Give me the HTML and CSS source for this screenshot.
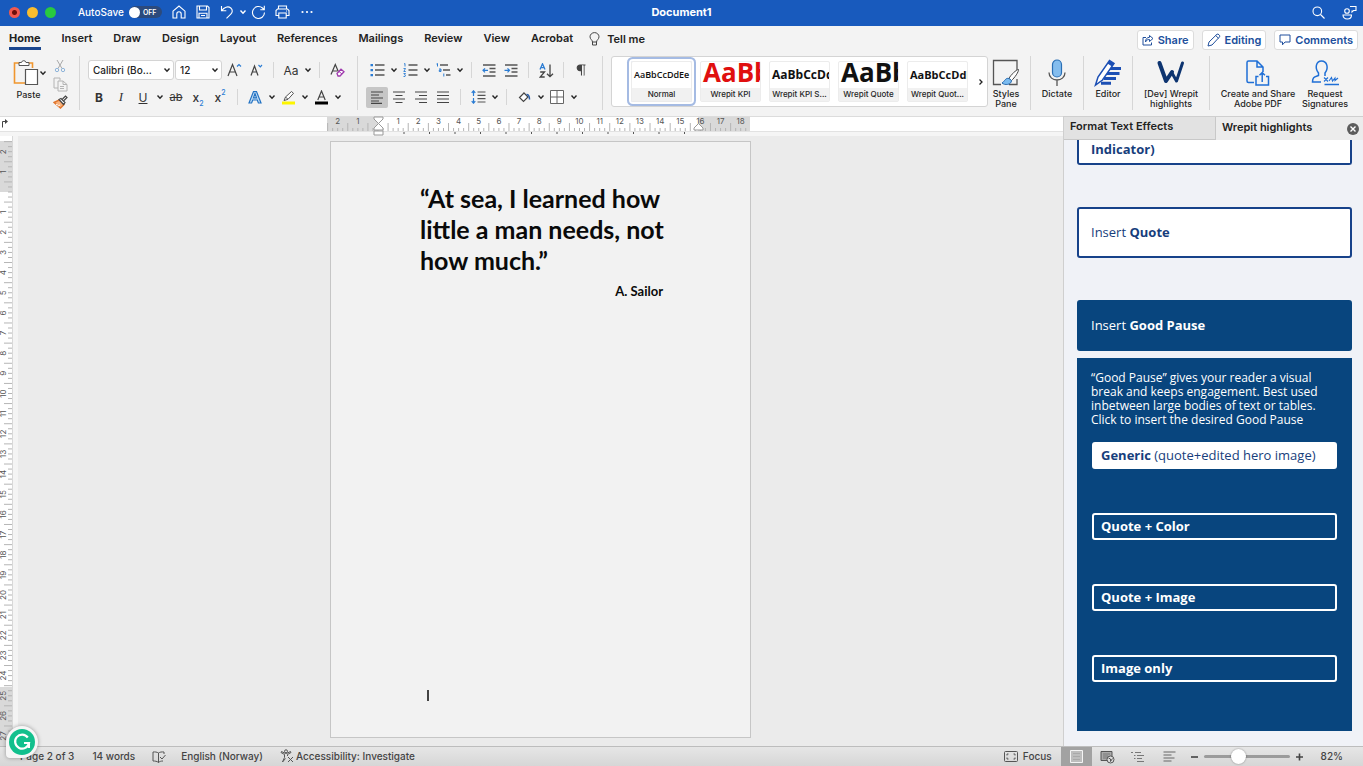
FILE: index.html
```html
<!DOCTYPE html>
<html lang="en">
<head>
  <meta charset="utf-8">
  <title>Document1</title>
  <link rel="stylesheet" href="styles.css">
</head>
<body>
  <svg class="defs" aria-hidden="true">
    <symbol id="chev" viewBox="0 0 8 8"><path d="M1.5 2.5 4 5.2 6.5 2.5" fill="none" stroke="currentColor" stroke-width="1.4"/></symbol>
  </svg>

  <header class="titlebar">
    <div class="title-left">
      <span class="light red"></span>
      <span class="light yellow"></span>
      <span class="light green"></span>
      <label class="autosave">AutoSave <span class="switch"><input type="checkbox"><span>OFF</span></span></label>
      <button class="tbtn" aria-label="Home"><svg width="14" height="14" viewBox="0 0 14 14"><path d="M1 6.200 7 1l6 5.200V13H9.200V9a2.200 2.200 0 0 0-4.400 0v4H1z"/></svg></button>
      <button class="tbtn" aria-label="Save"><svg width="14" height="14" viewBox="0 0 14 14"><path d="M1 1h10.500L13 2.500V13H1zM3.500 1v4h7V1M3 13V8.300h8V13M5 10.500h4"/></svg></button>
      <button class="tbtn" aria-label="Undo"><svg width="14" height="14" viewBox="0 0 14 14"><path d="M1.500 1v4.800h4.800M1.800 5.600C4 2.200 8 .8 10.800 3c2.300 2 1.600 4.600 0 6.200L6.500 13.400"/></svg></button>
      <button class="tbtn narrow" aria-label="Undo list"><svg width="8" height="8"><use href="#chev"/></svg></button>
      <button class="tbtn" aria-label="Redo"><svg width="15" height="15" viewBox="0 0 15 15"><path d="M13.500 7.500A6 6 0 1 1 11.500 3l1.500 1.500M13.300.8v4H9.300"/></svg></button>
      <button class="tbtn" aria-label="Print"><svg width="15" height="14" viewBox="0 0 15 14"><path d="M3.500 4V1h8v3M3.500 10.500H1V5.500L2.500 4h10L14 5.500v5h-2.500M3.800 8h7.400v5H3.800zM11 6h1"/></svg></button>
      <button class="tbtn" aria-label="More"><svg class="dots" width="12" height="4" viewBox="0 0 12 4"><circle cx="1.500" cy="2" r="1.100"/><circle cx="6" cy="2" r="1.100"/><circle cx="10.500" cy="2" r="1.100"/></svg></button>
    </div>
    <h1>Document1</h1>
    <div class="title-right">
      <button class="tbtn" aria-label="Search"><svg width="13" height="13" viewBox="0 0 13 13"><circle cx="5.300" cy="5.300" r="4.300"/><path d="m8.500 8.500 4 4"/></svg></button>
      <button class="tbtn" aria-label="Coauthors"><svg width="15" height="15" viewBox="0 0 15 15"><circle cx="5" cy="6" r="2.300"/><path d="M1 10h8.500c0 2.500-1.500 4-4.200 4S1 12.500 1 10zM8 1.500h6v4h-2.500L10 7V5.500"/></svg></button>
    </div>
  </header>

  <nav class="tabs">
    <a class="active" href="#">Home</a>
    <a href="#">Insert</a>
    <a href="#">Draw</a>
    <a href="#">Design</a>
    <a href="#">Layout</a>
    <a href="#">References</a>
    <a href="#">Mailings</a>
    <a href="#">Review</a>
    <a href="#">View</a>
    <a href="#">Acrobat</a>
    <a class="tell" href="#"><svg width="11" height="14" viewBox="0 0 11 14" fill="none" stroke="#444"><path d="M3.500 10C3.500 8 1 7.300 1 4.800a4.500 4.200 0 0 1 9 0C10 7.300 7.500 8 7.500 10zM3.500 10v3h4v-3"/></svg>Tell me</a>
    <div class="tab-actions">
      <button class="action"><svg width="12" height="12" viewBox="0 0 12 12"><path d="M4 3.500H1V11h8.500V8.500M7.500 1.500 11 4.500 7.500 7.500v-2C5.500 5.500 4.500 6 3.500 8c0-3 1.500-4.500 4-4.700z"/></svg>Share</button>
      <button class="action"><svg width="14" height="14" viewBox="0 0 14 14"><path d="M1 13l1-4L10 1.200c1-.8 3.500 1.400 2.600 2.600L5 12zM8.700 2.500l2.800 2.800"/></svg>Editing</button>
      <button class="action"><svg width="12" height="12" viewBox="0 0 12 12"><path d="M1 1h10v7H6L3.500 10.800V8H1z"/></svg>Comments</button>
    </div>
  </nav>

  <section class="ribbon">
    <div class="group clipboard">
      <button class="paste">
        <span class="paste-icon">
          <svg width="26" height="28" viewBox="0 0 26 28" fill="none"><path d="M6 4H1.500v20H12M16 4h3.500v5" stroke="#f0962e" stroke-width="1.600"/><path d="M6 6.500V3.500h2.500a2.300 2.300 0 0 1 4.500 0H16v3z" fill="#fff" stroke="#555"/><path d="M12.500 10.500h12v15h-12z" fill="#fff" stroke="#555" stroke-width="1.200"/></svg>
          <svg width="8" height="8"><use href="#chev"/></svg>
        </span>
        Paste
      </button>
      <div class="stack">
        <button class="tool" aria-label="Cut"><svg width="12" height="14" viewBox="0 0 12 14" fill="none"><path d="M3 1l5 8.500M9 1 4 9.500" stroke="#a9a9a9"/><circle cx="3" cy="11" r="1.700" stroke="#8fb5da"/><circle cx="9" cy="11" r="1.700" stroke="#8fb5da"/></svg></button>
        <button class="tool" aria-label="Copy"><svg width="15" height="15" viewBox="0 0 15 15" fill="none" stroke="#b4b4b4"><path d="M5 11H1V1h6v2.500M5 4h5l4 3.500V14H5zM10 4v3.500h4M7 9.500h4M7 11.500h4"/></svg></button>
        <button class="tool" aria-label="Format painter"><svg width="15" height="14" viewBox="0 0 15 14"><path d="M1 7.500 6 5l5 4.500L7.500 13z" fill="#f9b27c" stroke="#e0752c" stroke-width="1.400"/><path d="M3 9.500l2 .5M5 11l2-1" stroke="#fff"/><path d="m6 4.500 2-1 4 4-1.500 2zM9.500 4l3-3 1.500 1.500-3 3" fill="#fff" stroke="#444" stroke-width="1.200"/></svg></button>
      </div>
    </div>
    <i class="divider"></i>

    <div class="group rows font">
      <div class="row">
        <span class="select wide"><select aria-label="Font"><option>Calibri (Bo...</option></select><svg width="8" height="8"><use href="#chev"/></svg></span>
        <span class="select"><select aria-label="Font size"><option>12</option></select><svg width="8" height="8"><use href="#chev"/></svg></span>
        <button class="tool" aria-label="Grow font"><svg width="15" height="14" viewBox="0 0 15 14" fill="none"><path d="M1 13 5.500 1.500 10 13M2.600 9h5.800" stroke="#444" stroke-width="1.200"/><path d="m10 3.500 2-2 2 2" stroke="#2b7cd3" stroke-width="1.200"/></svg></button>
        <button class="tool" aria-label="Shrink font"><svg width="14" height="12" viewBox="0 0 14 12" fill="none"><path d="M2 11.500 5.500 2 9 11.500M3.300 8h4.400" stroke="#444" stroke-width="1.200"/><path d="m9.500 1 1.800 1.800L13 1" stroke="#2b7cd3" stroke-width="1.200"/></svg></button>
        <i class="sep"></i>
        <button class="tool thin">Aa</button>
        <button class="chev" aria-label="Case options"><svg width="8" height="8"><use href="#chev"/></svg></button>
        <i class="sep"></i>
        <button class="tool" aria-label="Clear formatting"><svg width="15" height="14" viewBox="0 0 15 14" fill="none"><path d="M1 11.500 5.300 1.500l3 7M2.600 8h4.600" stroke="#444" stroke-width="1.200"/><path d="m7 10.500 4-4.300 3 2.500L10 13H8z" fill="#fff" stroke="#a03aae" stroke-width="1.300"/><path d="m9 8.500 3 2.500" stroke="#a03aae"/></svg></button>
      </div>
      <div class="row">
        <button class="tool bold">B</button>
        <button class="tool italic">I</button>
        <button class="tool under">U</button>
        <button class="chev" aria-label="Underline options"><svg width="8" height="8"><use href="#chev"/></svg></button>
        <button class="tool strike">ab</button>
        <button class="tool script">x<sub>2</sub></button>
        <button class="tool script">x<sup>2</sup></button>
        <i class="sep"></i>
        <button class="tool" aria-label="Text effects"><svg width="14" height="14" viewBox="0 0 14 14"><path d="M1 13 5.500 1.500h3L13 13h-2.600L9.300 10H4.700L3.600 13zM5.500 7.800h3L7 3.500z" fill="#c5def5" stroke="#2272c3" stroke-width="1.200"/></svg></button>
        <button class="chev" aria-label="Effects options"><svg width="8" height="8"><use href="#chev"/></svg></button>
        <button class="tool" aria-label="Highlight"><svg width="15" height="15" viewBox="0 0 15 15"><path d="M1 11.500h13v3H1z" fill="#fdf500"/><path d="M3 10.500 4.500 7 10.500 1.500l2 1.800L7 9.300zM4.500 7 7 9.300" fill="#fff" stroke="#555"/></svg></button>
        <button class="chev" aria-label="Highlight options"><svg width="8" height="8"><use href="#chev"/></svg></button>
        <button class="tool" aria-label="Font color"><svg width="15" height="15" viewBox="0 0 15 15"><path d="M1 11.500h13v3H1z"/><path d="M3.800 10 7.500 1 11.200 10M5 7h5" fill="none" stroke="#444" stroke-width="1.200"/></svg></button>
        <button class="chev" aria-label="Color options"><svg width="8" height="8"><use href="#chev"/></svg></button>
      </div>
    </div>
    <i class="divider"></i>

    <div class="group rows para">
      <div class="row">
        <button class="tool" aria-label="Bullets"><svg width="15" height="14" viewBox="0 0 15 14"><path d="M5 2h9.500M5 7h9.500M5 12h9.500" stroke="#555" stroke-width="1.300"/><path d="M.5 1h2.500v2.200H.5zM.5 6h2.500v2.200H.5zM.5 11h2.500v2.200H.5z" fill="#2b7cd3"/></svg></button>
        <button class="chev" aria-label="Bullet options"><svg width="8" height="8"><use href="#chev"/></svg></button>
        <button class="tool" aria-label="Numbering"><svg width="15" height="14" viewBox="0 0 15 14" fill="none"><path d="M5.500 2h9M5.500 7h9M5.500 12h9" stroke="#555" stroke-width="1.300"/><path d="M1 1l1-.5v3M.5 5.500h2L.8 8.500h2M.5 10.500h2l-1 1.300 1 .5-.5 1.200H.5" stroke="#2b7cd3" stroke-width=".9"/></svg></button>
        <button class="chev" aria-label="Numbering options"><svg width="8" height="8"><use href="#chev"/></svg></button>
        <button class="tool" aria-label="Multilevel list"><svg width="15" height="14" viewBox="0 0 15 14" fill="none"><path d="M4 2h8M7 7h7M10 12h4.500" stroke="#555" stroke-width="1.300"/><path d="M.5 1l1-.5v3M3 6h2v2.500H3.300V7H5M7.800 10.500v3" stroke="#2b7cd3"/></svg></button>
        <button class="chev" aria-label="Multilevel options"><svg width="8" height="8"><use href="#chev"/></svg></button>
        <i class="sep"></i>
        <button class="tool" aria-label="Decrease indent"><svg width="14" height="13" viewBox="0 0 14 13" fill="none"><path d="M1 1h12.500M7.500 4.500h6M7.500 8h6M1 12h12.500" stroke="#555" stroke-width="1.300"/><path d="M6 6.300H1M3 4.300l-2 2 2 2" stroke="#2b7cd3" stroke-width="1.200"/></svg></button>
        <button class="tool" aria-label="Increase indent"><svg width="14" height="13" viewBox="0 0 14 13" fill="none"><path d="M1 1h12.500M7.500 4.500h6M7.500 8h6M1 12h12.500" stroke="#555" stroke-width="1.300"/><path d="M.5 6.300h5M3.500 4.300l2 2-2 2" stroke="#2b7cd3" stroke-width="1.200"/></svg></button>
        <i class="sep"></i>
        <button class="tool" aria-label="Sort"><svg width="15" height="15" viewBox="0 0 15 15" fill="none" stroke-width="1.300"><path d="M1 6.500 3.500.8 6 6.500M2 4.700h3" stroke="#2b7cd3"/><path d="M1.200 9h4.300l-4.300 5h4.500M11 1.500v12M8 10.700l3 3 3-3" stroke="#444"/></svg></button>
        <i class="sep"></i>
        <button class="tool" aria-label="Show marks"><svg width="10" height="12" viewBox="0 0 10 12"><path d="M9.500 1H4a2.800 2.800 0 0 0 0 5.600h1V1M5.500 1v10.500M8 1v10.500" fill="#444" stroke="#444" stroke-width="1.100"/><path d="M6 1.500h1.500v10H6z" fill="#f3f3f3"/></svg></button>
      </div>
      <div class="row">
        <button class="tool on" aria-label="Align left"><svg width="14" height="13" viewBox="0 0 14 13" stroke="#444" stroke-width="1.200"><path d="M1 1h12M1 4h8M1 7h12M1 10h8M1 12.400h11"/></svg></button>
        <button class="tool" aria-label="Center"><svg width="14" height="13" viewBox="0 0 14 13" stroke="#444" stroke-width="1.200"><path d="M1 1h12M3.500 4.500h7M1 8h12M3.500 11.500h7"/></svg></button>
        <button class="tool" aria-label="Align right"><svg width="14" height="13" viewBox="0 0 14 13" stroke="#444" stroke-width="1.200"><path d="M1 1h12M5 4.500h8M1 8h12M5 11.500h8"/></svg></button>
        <button class="tool" aria-label="Justify"><svg width="14" height="13" viewBox="0 0 14 13" stroke="#444" stroke-width="1.200"><path d="M1 1h12M1 4.500h12M1 8h12M1 11.500h12"/></svg></button>
        <i class="sep"></i>
        <button class="tool" aria-label="Line spacing"><svg width="15" height="14" viewBox="0 0 15 14" fill="none"><path d="M6.500 2h8M6.500 5.300h8M6.500 8.600h8M6.500 12h8" stroke="#555" stroke-width="1.200"/><path d="M2.500 1v5M.7 2.800l1.800-2 1.800 2M2.500 8v5M.7 11.200l1.800 2 1.800-2" stroke="#2b7cd3" stroke-width="1.200"/></svg></button>
        <button class="chev" aria-label="Spacing options"><svg width="8" height="8"><use href="#chev"/></svg></button>
        <i class="sep"></i>
        <button class="tool" aria-label="Shading"><svg width="13" height="13" viewBox="0 0 13 13"><path d="M5.500 1.500 10 6l-4.500 4.500L1.500 6.500 6 2" fill="#fff" stroke="#444" stroke-width="1.200"/><path d="M8.500 3.500c2 0 3 1.500 3 5" fill="none" stroke="#2b5ea8" stroke-width="1.500"/></svg></button>
        <button class="chev" aria-label="Shading options"><svg width="8" height="8"><use href="#chev"/></svg></button>
        <button class="tool" aria-label="Borders"><svg width="14" height="14" viewBox="0 0 14 14" fill="#fff" stroke="#666"><path d="M.5.5h13v13H.5zM7 .5v13M.5 7h13"/></svg></button>
        <button class="chev" aria-label="Border options"><svg width="8" height="8"><use href="#chev"/></svg></button>
      </div>
    </div>
    <i class="divider"></i>

    <div class="gallery">
      <button class="style current"><span class="sample small">AaBbCcDdEe</span><span class="name">Normal</span></button>
      <button class="style"><span class="sample big kpi">AaBb</span><span class="name">Wrepit KPI</span></button>
      <button class="style"><span class="sample mid">AaBbCcDd</span><span class="name">Wrepit KPI S...</span></button>
      <button class="style"><span class="sample big">AaBb</span><span class="name">Wrepit Quote</span></button>
      <button class="style"><span class="sample">AaBbCcDdE</span><span class="name">Wrepit Quot...</span></button>
      <button class="more" aria-label="More styles"><svg width="6" height="8" viewBox="0 0 6 8"><path d="m1.500 1.500 2.500 2.500-2.500 2.500" fill="none" stroke="#222" stroke-width="1.300"/></svg></button>
    </div>

    <div class="group big-tools">
      <button class="big-tool w-small"><svg width="28" height="28" viewBox="0 0 28 28" fill="none"><path d="M25 14V1.500H1.500v24H9M25 20v5.500h-8" stroke="#555" stroke-width="1.300"/><path d="M26.500 10.500c-2 0-8 5.500-9.500 9l2.500 2c3-2.500 7.500-9 7-11z" fill="#fff" stroke="#444"/><path d="M17 19.500c-3.500-1-4 2.500-7 4.500 2.500 2.500 9.500 2 9.500-2.500z" fill="#7cbcf0" stroke="#2b6cb0"/></svg>Styles<br>Pane</button>
      <i class="divider"></i>
      <button class="big-tool w-mid"><svg width="20" height="28" viewBox="0 0 20 28" fill="none"><rect x="5.500" y="1" width="9" height="17" rx="4.500" fill="#84bdee" stroke="#2a6fb5" stroke-width="1.200"/><path d="M2 13.500c0 10 16 10 16 0M10 21v6" stroke="#555" stroke-width="1.300"/></svg>Dictate</button>
      <i class="divider"></i>
      <button class="big-tool w-small"><svg width="28" height="28" viewBox="0 0 28 28"><path d="M15 9.500h12M12.500 14.500h13M10 19.500h12M7 24.300h10" stroke="#1c4fb4" stroke-width="3"/><path d="M1.500 26 4 18 15.500 1.500l4.500 3L8.500 21z" fill="#fff" stroke="#1c4fb4" stroke-width="1.500"/><path d="m15.500 1.500 4.500 3-2 3-4.500-3z" fill="#1c4fb4"/></svg>Editor</button>
      <i class="divider"></i>
      <button class="big-tool w-wide"><svg width="30" height="28" viewBox="0 0 30 28" fill="none" stroke="#0d3470" stroke-linecap="round"><path d="M3.500 4 10 22l6-9" stroke-width="4" stroke-linejoin="round"/><path d="m16 14 4.500 8L26.500 4" stroke-width="3" stroke-linejoin="round"/></svg>[Dev] Wrepit<br>highlights</button>
      <i class="divider"></i>
      <button class="big-tool w-pdf"><svg width="24" height="28" viewBox="0 0 24 28" fill="none" stroke="#1f6fd6" stroke-width="1.500"><path d="M8 23.500H2.500a1.500 1.500 0 0 1-1.500-1.500V3.500A1.500 1.500 0 0 1 2.500 2H11l6 6v5M11 2v6h6M12.500 17.500H10V26h12.500v-8.500H20M16.200 23v-9M13.500 16.200l2.700-2.700 2.700 2.700"/></svg>Create and Share<br>Adobe PDF</button>
      <button class="big-tool w-sign"><svg width="28" height="28" viewBox="0 0 28 28" fill="none" stroke="#1f6fd6" stroke-width="1.500"><path d="M10 23H1.500c0-5 2-5 6-6.500V14C3.500 9 5 2 10.500 2S18 9 14 14v3M13.500 25.500H28"/><path d="m13 18.500 4 4M17 18.500l-4 4M18 22l2.500-3.500 1 3.500 2.500-3v2.500l3-2.500" stroke-width="1.100"/></svg>Request<br>Signatures</button>
    </div>
  </section>

  <main class="workspace">
    <section class="editor">
      <div class="ruler-row">
        <span class="corner"><svg width="8" height="9" viewBox="0 0 8 9"><path d="M2.500 8.500v-6H6" fill="none" stroke="#444"/><path d="M5 0v5l3-2.500z" fill="#444"/></svg></span>
        <div class="ruler-track"><svg class="ruler" id="rulerH" width="429" height="20"></svg></div>
      </div>
      <div class="canvas">
        <div class="ruler-side"><svg class="ruler" id="rulerV" width="12" height="610"></svg></div>
        <div class="paper-area">
          <article class="paper">
            <blockquote>“At sea, I learned how<br>little a man needs, not<br>how much.”</blockquote>
            <p class="author">A. Sailor</p>
            <span class="caret"></span>
          </article>
        </div>
      </div>
    </section>

    <aside class="pane">
      <div class="pane-tabs">
        <button class="pane-tab">Format Text Effects</button>
        <button class="pane-tab selected">Wrepit highlights</button>
        <button class="close" aria-label="Close pane"><svg width="12" height="12" viewBox="0 0 12 12"><circle cx="6" cy="6" r="6" fill="#5c5c5c"/><path d="m3.500 3.500 5 5M8.500 3.500l-5 5" stroke="#fff" stroke-width="1.400"/></svg></button>
      </div>
      <div class="pane-body">
        <button class="card cut"><b>Indicator)</b></button>
        <button class="card">Insert <b>Quote</b></button>
        <button class="card filled">Insert <b>Good Pause</b></button>
        <div class="details">
          <p>“Good Pause” gives your reader a visual<br>break and keeps engagement. Best used<br>inbetween large bodies of text or tables.<br>Click to insert the desired Good Pause</p>
          <button class="option solid"><b>Generic</b> (quote+edited hero image)</button>
          <button class="option"><b>Quote + Color</b></button>
          <button class="option"><b>Quote + Image</b></button>
          <button class="option"><b>Image only</b></button>
        </div>
      </div>
    </aside>
  </main>

  <footer class="status">
    <span class="status-page">Page 2 of 3</span>
    <span class="status-words">14 words</span>
    <svg width="14" height="12" viewBox="0 0 14 12" fill="none" stroke="#555"><path d="M6.500 2v9.500M6.500 2C5 1 3 .8 1 1v9c2 0 4 .2 5.500 1.500C7.500 10.500 9 10 11 10M6.500 2C8 1 9.500.8 12 1v2M8 6l2 2 3.500-4"/></svg>
    <span class="status-lang">English (Norway)</span>
    <button class="access"><svg width="14" height="14" viewBox="0 0 14 14" fill="none" stroke="#555"><circle cx="6" cy="2.300" r="1.500"/><path d="M1 3.500 4.500 5.500v3L2.500 13M11 3.500 7.500 5.500V7M2.500 13l3-3.500M1 3.500l.5-1 4 2h1l4-2 .5 1M8 8l5 5M13 8l-5 5"/></svg>Accessibility: Investigate</button>
    <div class="status-right">
      <button class="focus"><svg width="14" height="11" viewBox="0 0 14 11" fill="none" stroke="#555"><rect x=".5" y=".5" width="13" height="10" rx="1"/><path d="M3 4.500V3h1.500M9.500 3H11v1.500M11 6.500V8H9.500M4.500 8H3V6.500"/></svg>Focus</button>
      <button class="view on" aria-label="Print layout"><svg width="13" height="13" viewBox="0 0 13 13"><path d="M.5.5h12v12H.5z" fill="#bdbdbd" stroke="#f4f4f4"/><path d="M3 3.500h7M3 6.500h7M3 9.500h7" stroke="#a9a9a9"/></svg></button>
      <button class="view" aria-label="Web layout"><svg width="15" height="14" viewBox="0 0 15 14" fill="none" stroke="#555"><path d="M7 10.500H1v-9h11V6" fill="#aaa"/><path d="M3 4h7M3 6h5M3 8h4" stroke="#777"/><circle cx="10.500" cy="9.500" r="3.500" fill="#ddd"/><path d="m8.500 8 2 1v2.500l2-3"/></svg></button>
      <button class="view" aria-label="Outline"><svg width="14" height="11" viewBox="0 0 14 11" stroke="#777"><path d="M0 1.500h2M4 1.500h6M3 4.500h1.500M6 4.500h7M3 7.500h1.500M6 7.500h5M6 10.500h7"/></svg></button>
      <button class="view" aria-label="Draft"><svg width="13" height="11" viewBox="0 0 13 11" stroke="#666"><path d="M.5 1h12M.5 4h8M.5 7h11M.5 10h8"/></svg></button>
      <button class="zoom-btn" aria-label="Zoom out"><svg width="7" height="8" viewBox="0 0 7 8" stroke="#444" stroke-width="1.600"><path d="M0 4h7"/></svg></button>
      <input class="zoom" type="range" min="0" max="100" value="39" aria-label="Zoom">
      <button class="zoom-btn" aria-label="Zoom in"><svg width="7" height="8" viewBox="0 0 7 8" stroke="#444" stroke-width="1.600"><path d="M0 4h7M3.500.5v7"/></svg></button>
      <span class="percent">82%</span>
    </div>
  </footer>

  <button class="helper" aria-label="Writing helper"><svg width="26" height="26" viewBox="0 0 26 26"><circle cx="13" cy="13" r="13" fill="#12c08d"/><path d="M18.800 8.500A7 7 0 1 0 20 14h-5" fill="none" stroke="#fff" stroke-width="2.200"/><path d="M15.500 14H20v5" fill="none" stroke="#fff" stroke-width="2"/></svg></button>

  <script src="script.js"></script>
</body>
</html>
```
FILE: styles.css
```css
* {
  box-sizing: border-box;
}
body {
  margin: 0;
  height: 100vh;
  display: flex;
  flex-direction: column;
  overflow: hidden;
  font-family: Inter, "Liberation Sans", sans-serif;
  font-size: 11px;
  color: #262626;
  background: #f3f3f3;
}
button {
  padding: 0;
  border: none;
  background: none;
  font: inherit;
  color: inherit;
  cursor: pointer;
}
svg {
  display: block;
  flex: none;
}
.defs {
  position: absolute;
  width: 0;
  height: 0;
}

/* title bar */
.titlebar {
  height: 26px;
  flex: none;
  display: grid;
  grid-template-columns: 1fr auto 1fr;
  align-items: center;
  padding-bottom: 2px;
  background: #185abd;
  color: #fff;
}
.titlebar h1 {
  margin: 0;
  font-size: 11px;
  font-weight: 700;
}
.title-left, .title-right {
  display: flex;
  align-items: center;
}
.title-left {
  padding-left: 9px;
}
.title-right {
  justify-content: flex-end;
  gap: 7px;
  padding-right: 2px;
}
.light {
  width: 11px;
  height: 11px;
  margin-right: 7px;
  border-radius: 50%;
}
.red {
  background: radial-gradient(circle, #6d0f0a 0 2px, #f2594f 3px);
}
.yellow {
  background: #f9bd2e;
}
.green {
  background: #28c940;
}
.autosave {
  display: flex;
  align-items: center;
  gap: 5px;
  margin: 0 5px 0 15px;
  font-size: 10px;
  font-weight: 500;
}
.switch {
  display: flex;
  align-items: center;
  gap: 3px;
  width: 33px;
  height: 12px;
  border-radius: 6px;
  background: #2c4a7c;
  font-size: 7px;
  font-weight: 600;
}
.switch input {
  appearance: none;
  width: 11px;
  height: 11px;
  margin: 0;
  border-radius: 50%;
  background: #fff;
}
.tbtn {
  width: 24px;
  height: 20px;
  display: flex;
  align-items: center;
  justify-content: center;
}
.tbtn.narrow {
  width: 8px;
}
.tbtn svg {
  fill: none;
  stroke: #fff;
  stroke-width: 1.1;
}
.tbtn .dots {
  fill: #fff;
  stroke: none;
}

/* ribbon tabs */
.tabs {
  height: 28px;
  flex: none;
  display: flex;
  align-items: flex-start;
  gap: 21px;
  padding: 4px 5px 0 9px;
}
.tabs a {
  height: 20px;
  line-height: 17px;
  font-weight: 600;
  color: #222;
  text-decoration: none;
}
.tabs a.active {
  font-weight: 700;
  border-bottom: 3px solid #1b478f;
}
.tabs .tell {
  display: flex;
  align-items: center;
  gap: 7px;
  height: 18px;
  margin-left: -5px;
}
.tab-actions {
  display: flex;
  gap: 8px;
  margin-left: auto;
}
.action {
  height: 20px;
  display: flex;
  align-items: center;
  gap: 4px;
  padding: 0 4px;
  border: 1px solid #dcdcdc;
  border-radius: 3px;
  background: #fff;
  color: #204f9c;
  font-weight: 600;
}
.action svg {
  fill: none;
  stroke: #204f9c;
}

/* ribbon */
.ribbon {
  height: 62px;
  flex: none;
  display: flex;
  align-items: flex-start;
  padding: 2px 12px 0 8px;
}
.group {
  display: flex;
  flex: none;
}
.divider {
  width: 1px;
  height: 54px;
  flex: none;
  margin: 0 8px;
  background: #d6d6d6;
}
.clipboard {
  width: 63px;
}
.paste {
  width: 41px;
  align-self: flex-start;
  font-size: 9px;
  font-weight: 500;
}
.paste-icon {
  display: flex;
  align-items: center;
  padding-left: 5px;
  margin: 3px 0 2px;
}
.stack {
  display: flex;
  flex-direction: column;
  padding-top: 1px;
}
.stack .tool {
  height: 18px;
}
.rows {
  flex-direction: column;
  gap: 4px;
  padding-top: 3px;
}
.font {
  width: 261px;
}
.para {
  width: 228px;
}
.row {
  display: flex;
  align-items: center;
  height: 22px;
}
.row + .row {
  height: 24px;
}
.select {
  display: grid;
  align-items: center;
  width: 47px;
  height: 20px;
  margin-right: 1px;
  border: 1px solid #d4d4d4;
  border-radius: 3px;
  background: #fff;
}
.select.wide {
  width: 86px;
}
.select select, .select svg {
  grid-area: 1 / 1;
}
.select svg {
  justify-self: end;
  margin-right: 2px;
  pointer-events: none;
}
.select select {
  appearance: none;
  width: 100%;
  padding: 0 0 0 4px;
  border: none;
  background: none;
  font: 500 10px Inter, sans-serif;
  color: #222;
}
.tool {
  width: 22px;
  height: 21px;
  flex: none;
  display: flex;
  align-items: center;
  justify-content: center;
  color: #333;
  font-size: 12px;
}
.tool.on {
  border-radius: 2px;
  background: #c6c6c6;
}
.tool.bold {
  font-weight: 700;
}
.tool.italic {
  font-family: "Liberation Serif", serif;
  font-style: italic;
  font-size: 13px;
}
.tool.under {
  text-decoration: underline;
}
.tool.strike {
  font-size: 11px;
  text-decoration: line-through;
}
.tool.script {
  font-weight: 500;
}
.tool sub, .tool sup {
  font-size: 7px;
  line-height: 0;
  color: #2b7cd3;
}
.tool sub {
  align-self: flex-end;
  padding-bottom: 4px;
}
.tool sup {
  align-self: flex-start;
  padding-top: 6px;
}
.chev {
  width: 11px;
  height: 21px;
  display: flex;
  align-items: center;
  justify-content: center;
}
.sep {
  width: 1px;
  height: 16px;
  flex: none;
  margin: 0 6px;
  background: #d6d6d6;
}

/* style gallery */
.gallery {
  flex: 1;
  min-width: 0;
  height: 51px;
  display: flex;
  align-items: center;
  gap: 8px;
  margin-right: 1px;
  padding-left: 19px;
  overflow: hidden;
  border: 1px solid #d4d4d4;
  border-radius: 3px;
  background: #fff;
}
.style {
  width: 61px;
  height: 41px;
  flex: none;
  display: flex;
  flex-direction: column;
  border: 1px solid #ececec;
  border-radius: 2px;
}
.style.current {
  box-shadow: 0 0 0 2px #fff, 0 0 0 4px #a5bbe3;
}
.sample {
  width: 100%;
  height: 26px;
  overflow: hidden;
  padding-left: 2px;
  font-family: "Open Sans", sans-serif;
  font-size: 11px;
  font-weight: 700;
  line-height: 26px;
  text-align: left;
  color: #111;
}
.sample.small {
  font-size: 9px;
  font-weight: 600;
}
.sample.mid {
  font-size: 12px;
}
.sample.big {
  font-size: 26px;
  line-height: 20px;
}
.sample.kpi {
  color: #e00f0f;
}
.name {
  width: 100%;
  height: 13px;
  line-height: 13px;
  white-space: nowrap;
  background: #f1f1f1;
  font-size: 8px;
  font-weight: 500;
}
.more {
  margin: 0 3px 0 auto;
}

/* large ribbon buttons */
.big-tools .divider {
  margin: 0 7px;
}
.big-tool {
  display: flex;
  flex-direction: column;
  align-items: center;
  gap: 2px;
  padding-top: 3px;
  font-size: 9px;
  font-weight: 500;
  line-height: 10px;
  white-space: nowrap;
}
.w-small {
  width: 34px;
}
.w-mid {
  width: 38px;
}
.w-wide {
  width: 62px;
}
.w-pdf {
  width: 82px;
}
.w-sign {
  width: 52px;
}

/* document */
.workspace {
  flex: 1;
  min-height: 0;
  display: flex;
}
.editor {
  flex: 1;
  display: flex;
  flex-direction: column;
}
.ruler-row {
  height: 20px;
  flex: none;
  display: flex;
  background: linear-gradient(#fff 0 14px, #e2e2e2 14px 15px, #f5f5f5 15px);
  border-top: 1px solid #dcdcdc;
}
.corner {
  width: 12px;
  padding: 2px 0 0;
}
.ruler-track {
  flex: 1;
  display: flex;
  justify-content: center;
}
.ruler {
  overflow: visible;
  font-family: Inter, sans-serif;
  font-size: 8px;
  fill: #555;
}
.canvas {
  flex: 1;
  min-height: 0;
  display: flex;
}
.ruler-side {
  width: 18px;
  flex: none;
  background: linear-gradient(90deg, #fff 0 12px, #d8d8d8 12px 13px, #f4f4f4 13px);
}
.paper-area {
  flex: 1;
  display: flex;
  justify-content: center;
  padding: 5px 0 8px;
  background: #ebebeb;
}
.paper {
  width: 421px;
  display: flex;
  flex-direction: column;
  padding: 41px 87px 36px 89px;
  border: 1px solid #c6c6c6;
  background: #f2f2f2;
  color: #0a0a0a;
  font-family: Lato, sans-serif;
  font-weight: 700;
}
.paper blockquote {
  margin: 0;
  font-size: 25px;
  line-height: 31px;
  white-space: nowrap;
}
.author {
  margin: 0;
  font-size: 13px;
  line-height: 31px;
  text-align: right;
}
.caret {
  width: 2px;
  height: 11px;
  margin: auto 0 0 7px;
  background: #444;
}

/* side pane */
.pane {
  width: 300px;
  flex: none;
  display: flex;
  flex-direction: column;
  border-left: 1px solid #cfcfcf;
  background: #f0f2f7;
}
.pane-tabs {
  height: 24px;
  flex: none;
  display: flex;
  align-items: center;
  background: #ececec;
  border-top: 1px solid #cfcfcf;
}
.pane-tab {
  height: 100%;
  padding: 0 6px 4px;
  font-weight: 600;
  color: #222;
}
.pane-tab:first-child {
  width: 152px;
  text-align: left;
  background: #e2e2e2;
  border-right: 1px solid #c8c8c8;
  border-bottom: 1px solid #c8c8c8;
}
.close {
  margin: 0 4px 0 auto;
}
.pane-body {
  flex: 1;
  min-height: 0;
  display: flex;
  flex-direction: column;
  padding: 0 11px 15px 13px;
  font-family: "Open Sans", sans-serif;
}
.card {
  height: 51px;
  flex: none;
  margin-bottom: 42px;
  padding: 0 12px 1px;
  border: 2px solid #17428a;
  border-radius: 3px;
  background: #fff;
  color: #173e7c;
  font-size: 13px;
  text-align: left;
}
.card.cut {
  height: 25px;
  padding-bottom: 8px;
  border-top: none;
  border-radius: 0 0 3px 3px;
}
.card.filled {
  margin-bottom: 7px;
  border-color: #08457e;
  background: #08457e;
  color: #fff;
}
.details {
  flex: 1;
  display: flex;
  flex-direction: column;
  gap: 44px;
  padding: 13px 15px;
  background: #08457e;
  color: #fff;
}
.details p {
  margin: 0 0 -29px -1px;
  font-size: 12px;
  line-height: 14px;
  white-space: nowrap;
}
.option {
  height: 27px;
  flex: none;
  padding: 0 7px 1px;
  border: 2px solid #fff;
  border-radius: 3px;
  font-size: 13px;
  line-height: 20px;
  text-align: left;
}
.option.solid {
  background: #fff;
  color: #173e7c;
}

/* status bar */
.status {
  height: 20px;
  flex: none;
  display: flex;
  align-items: center;
  padding-left: 20px;
  border-top: 1px solid #bdbdbd;
  background: linear-gradient(#e6e6e6, #d6d6d6);
  color: #444;
  font-size: 10px;
  font-weight: 500;
  line-height: 12px;
}
.status > span, .access, .focus, .percent {
  padding-bottom: 1px;
}
.status-words {
  margin: 0 17px 0 18px;
}
.status-lang {
  margin: 0 17px 0 15px;
}
.access, .focus {
  display: flex;
  align-items: center;
  gap: 2px;
}
.focus {
  gap: 5px;
  margin-right: 9px;
}
.status-right {
  display: flex;
  align-items: center;
  height: 100%;
  margin-left: auto;
  padding-right: 20px;
}
.view {
  width: 31px;
  height: 100%;
  display: flex;
  align-items: center;
  justify-content: center;
}
.view.on {
  background: #a2a2a2;
}
.zoom-btn {
  margin: 0 6px;
}
.zoom {
  appearance: none;
  width: 86px;
  height: 3px;
  margin: 0;
  border-radius: 2px;
  background: #9b9b9b;
}
.zoom::-webkit-slider-thumb {
  appearance: none;
  width: 15px;
  height: 15px;
  border-radius: 50%;
  background: #fff;
  box-shadow: 0 0 2px rgba(0, 0, 0, 0.4);
}
.percent {
  margin-left: 12px;
}

/* floating writing helper */
.helper {
  position: absolute;
  left: 6px;
  bottom: 8px;
  padding: 3px;
  border-radius: 50% 50% 50% 4px;
  background: #f6f6f6;
  box-shadow: 0 0 4px rgba(0, 0, 0, 0.35);
}
```
FILE: script.js
```js
const NS = 'http://www.w3.org/2000/svg';
const CM = 20.15; // one centimetre at the current zoom

function add(parent, tag, attrs, text) {
  const el = document.createElementNS(NS, tag);
  for (const key in attrs) el.setAttribute(key, attrs[key]);
  if (text !== undefined) el.textContent = text;
  parent.appendChild(el);
  return el;
}

// Horizontal ruler
function drawTop() {
  const svg = document.getElementById('rulerH');
  const zero = 55;
  add(svg, 'rect', { x: 4, y: 0, width: 51, height: 14, fill: '#d9d9d9' });
  add(svg, 'rect', { x: 375, y: 0, width: 52, height: 14, fill: '#d9d9d9' });
  for (let i = -10; i <= 73; i++) {
    const x = zero + i * CM / 4;
    const half = i % 4 !== 0 && i % 2 === 0;
    add(svg, 'path', { d: `M${x} ${half ? 6 : 11}V14`, stroke: '#b5b5b5' });
  }
  for (let n = -2; n <= 18; n++) {
    if (n === 0) continue;
    add(svg, 'text', { x: zero + n * CM, y: 7, 'text-anchor': 'middle' }, Math.abs(n));
  }
  for (let n = 1; n <= 12; n++) {
    add(svg, 'rect', { x: zero + n * 25.5, y: 15, width: 1, height: 2 });
  }
  // indent markers
  add(svg, 'path', { d: 'M51 0h9v2l-4.500 4.500L51 2zM51 13v-2l4.500-4.500L60 11v2zM51 14h9v4h-9z', fill: '#fff', stroke: '#999' });
  add(svg, 'path', { d: 'M371 13v-2l4.500-4.500L380 11v2z', fill: '#fff', stroke: '#999' });
}

// Vertical ruler
function drawSide() {
  const svg = document.getElementById('rulerV');
  const zero = 56;
  add(svg, 'rect', { x: 0, y: 5, width: 12, height: 51, fill: '#d9d9d9' });
  add(svg, 'rect', { x: 0, y: 551, width: 12, height: 59, fill: '#d9d9d9' });
  for (let i = -10; i <= 109; i++) {
    const y = zero + i * CM / 4;
    const half = i % 4 !== 0 && i % 2 === 0;
    add(svg, 'path', { d: `M${half ? 4 : 8} ${y}H12`, stroke: '#b5b5b5' });
  }
  for (let n = -2; n <= 27; n++) {
    if (n === 0) continue;
    const y = zero + n * CM;
    add(svg, 'text', { x: 6, y: y, 'text-anchor': 'middle', transform: `rotate(-90 6 ${y})` }, Math.abs(n));
  }
}

drawTop();
drawSide();
```
